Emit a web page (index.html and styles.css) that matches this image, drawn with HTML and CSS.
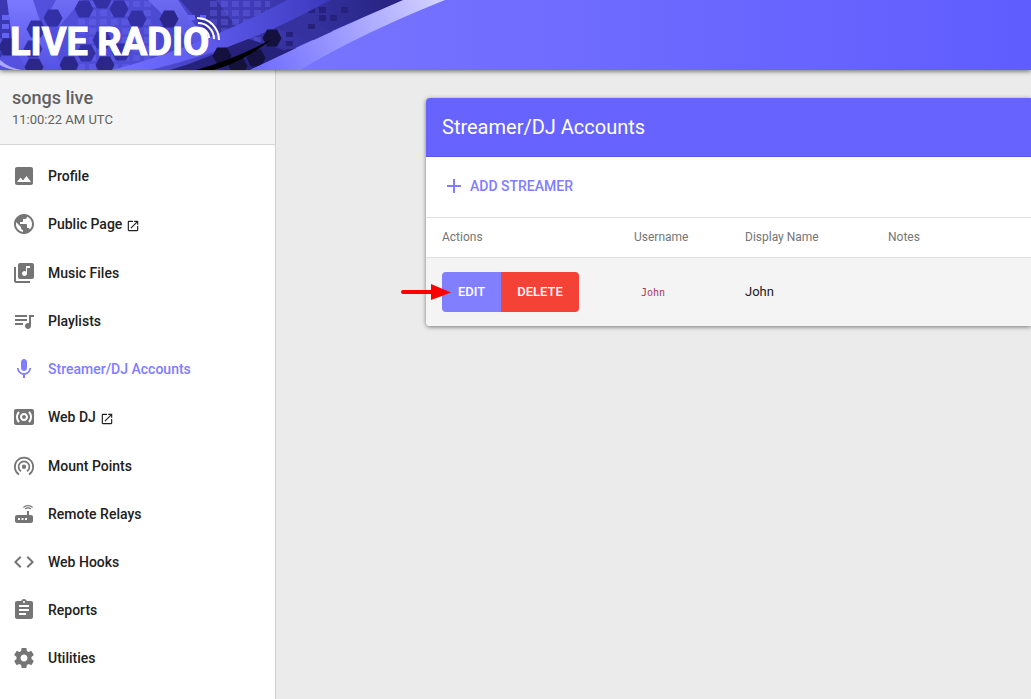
FILE: index.html
```html
<!DOCTYPE html>
<html lang="en">
<head>
<meta charset="utf-8">
<meta name="viewport" content="width=device-width, initial-scale=1">
<title>Streamer/DJ Accounts</title>
<link rel="stylesheet" href="styles.css">
</head>
<body>
<header class="topbar">
  <svg class="brand" width="450" height="70" viewBox="0 0 450 70" role="img" aria-label="Live Radio">
    <defs>
      <linearGradient id="base" x1="0" x2="1"><stop offset="0" stop-color="#5552e0"/><stop offset=".4" stop-color="#4c49d2"/><stop offset=".6" stop-color="#403cb8"/><stop offset="1" stop-color="#25227e"/></linearGradient>
      <linearGradient id="band" x1="0" x2="1"><stop offset="0" stop-color="#7472ff"/><stop offset=".4" stop-color="#5f5cf0"/><stop offset="1" stop-color="#3d39bd"/></linearGradient>
      <linearGradient id="shine" gradientUnits="userSpaceOnUse" x1="255" y1="70" x2="440" y2="0"><stop offset="0" stop-color="#6e6bff"/><stop offset=".45" stop-color="#9b99ff"/><stop offset="1" stop-color="#d3d2ff"/></linearGradient>
      <linearGradient id="beam" x1="0" y1="0" x2="0" y2="1"><stop offset="0" stop-color="#7b79ff"/><stop offset="1" stop-color="#5552e4"/></linearGradient>
      <pattern id="tiles" width="11" height="9" patternUnits="userSpaceOnUse"><rect x="1" y="1" width="7" height="6" fill="#7470f5" fill-opacity=".3"/></pattern>
      <path id="hex" d="M-9.500 0-5-8.500H5L9.500 0 5 8.500H-5Z"/>
    </defs>
    <path fill="url(#base)" d="M0 0H405Q330 30 250 70H0Z"/>
    <path fill="#3b37b0" d="M0 0H8L14 40 0 58Z"/>
    <path fill="url(#beam)" d="M7 0H33L45 36 64 70H26L12 40Z"/>
    <path fill="url(#beam)" opacity=".7" d="M56 0H82L58 28 46 18ZM0 38 14 46 20 58 0 52ZM148 0H178L214 54 190 42Z"/>
    <path fill="#35319f" d="M180 0H216L250 44 232 60ZM274 28 296 14 337 34 320 42ZM236 24 252 20 300 50 282 57Z"/>
    <path fill="url(#tiles)" d="M78 0H154V70H78ZM210 0H270V48H210Z"/>
    <g fill="#3330a6">
      <use href="#hex" x="53" y="18"/><use href="#hex" x="84" y="9"/><use href="#hex" x="119" y="9"/><use href="#hex" x="102" y="0"/><use href="#hex" x="36" y="29"/><use href="#hex" x="33" y="49"/><use href="#hex" x="86" y="53"/><use href="#hex" x="137" y="19"/><use href="#hex" x="121" y="52"/><use href="#hex" x="102" y="40"/>
    </g>
    <g fill="#2a268a"><use href="#hex" x="8" y="47"/><use href="#hex" x="34" y="67"/><use href="#hex" x="69" y="65"/><use href="#hex" x="105" y="65"/><use href="#hex" x="169" y="19"/></g>
    <g fill="#25217d"><path d="M308 7h7v6h-7ZM319 7h7v6h-7ZM341 7h7v6h-7ZM319 15h7v6h-7ZM330 15h7v6h-7ZM308 24h7v5h-7ZM286 32h7v5h-7ZM286 41h7v5h-7ZM286 49h7v4h-7Z"/></g>
    <g fill="#6563f2"><path d="M2 15h7v5H2ZM2 24h7v5H2ZM2 33h7v5H2ZM188 15h7v5h-7ZM200 15h6v5h-6Z"/></g>
    <path fill="#26227c" d="M170 70Q206 60 246 38L290 52 250 70Z"/>
    <path fill="url(#band)" d="M112 70Q198 48 287 0H330Q245 48 150 70Z"/>
    <g fill="#15113f"><use href="#hex" x="272" y="38"/><use href="#hex" x="256" y="58"/><use href="#hex" x="222" y="56"/><use href="#hex" x="238" y="66"/></g>
    <path fill="#000" d="M196 70Q235 59 272 39 240 64 213 70Z"/>
    <path fill="url(#shine)" d="M250 70Q327 33 403 0H445Q360 34 300 70Z"/>
    <path fill="#aaa8ff" d="M0 60Q9 68 22 70H14Q5 68 0 65Z"/>
    <text class="brand-text" x="10" y="55">LIVE RADIO</text>
    <g fill="none" stroke="#fff" stroke-width="2"><path d="M197 18A22 22 0 0 1 219 40"/><path d="M198 23A16 16 0 0 1 214 39"/><path d="M199 28A10 10 0 0 1 209 38"/></g>
  </svg>
</header>
<div class="layout">
  <aside class="sidebar">
    <div class="station">
      <div class="station-name">songs live</div>
      <div class="station-time">11:00:22 AM UTC</div>
    </div>
    <nav class="menu">
      <a href="#"><svg class="icon" viewBox="0 0 24 24"><path d="M21 19V5c0-1.100-.9-2-2-2H5c-1.100 0-2 .9-2 2v14c0 1.100.9 2 2 2h14c1.100 0 2-.9 2-2zM8.500 13.500l2.500 3.010L14.500 12l4.500 6H5l3.500-4.500z"/></svg><span>Profile</span></a>
      <a class="external" href="#"><svg class="icon" viewBox="0 0 24 24"><path d="M12 2C6.480 2 2 6.480 2 12s4.480 10 10 10 10-4.480 10-10S17.520 2 12 2zm-1 17.930c-3.950-.49-7-3.850-7-7.930 0-.62.08-1.210.21-1.790L9 15v1c0 1.100.9 2 2 2v1.930zm6.900-2.540c-.26-.81-1-1.390-1.900-1.390h-1v-3c0-.55-.45-1-1-1H8v-2h2c.55 0 1-.45 1-1V7h2c1.100 0 2-.9 2-2v-.41c2.930 1.190 5 4.060 5 7.410 0 2.080-.8 3.970-2.100 5.390z"/></svg><span>Public Page</span><svg class="open" viewBox="0 0 24 24"><path d="M19 19H5V5h7V3H5c-1.110 0-2 .9-2 2v14c0 1.100.89 2 2 2h14c1.100 0 2-.9 2-2v-7h-2v7zM14 3v2h3.590l-9.830 9.830 1.410 1.410L19 6.410V10h2V3h-7z"/></svg></a>
      <a href="#"><svg class="icon" viewBox="0 0 24 24"><path d="M20 2H8c-1.100 0-2 .9-2 2v12c0 1.100.9 2 2 2h12c1.100 0 2-.9 2-2V4c0-1.100-.9-2-2-2zm-2 5h-3v5.500c0 1.380-1.120 2.500-2.500 2.500S10 13.880 10 12.500s1.120-2.500 2.500-2.500c.57 0 1.080.19 1.500.51V5h4v2zM4 6H2v14c0 1.100.9 2 2 2h14v-2H4V6z"/></svg><span>Music Files</span></a>
      <a href="#"><svg class="icon" viewBox="0 0 24 24"><path d="M15 6H3v2h12V6zm0 4H3v2h12v-2zM3 16h8v-2H3v2zM17 6v8.180c-.31-.11-.65-.18-1-.18-1.660 0-3 1.340-3 3s1.340 3 3 3 3-1.340 3-3V8h3V6h-5z"/></svg><span>Playlists</span></a>
      <a class="active" href="#" aria-current="page"><svg class="icon" viewBox="0 0 24 24"><path d="M12 14c1.660 0 2.990-1.340 2.990-3L15 5c0-1.660-1.340-3-3-3S9 3.340 9 5v6c0 1.660 1.340 3 3 3zm5.300-3c0 3-2.540 5.100-5.300 5.100S6.700 14 6.700 11H5c0 3.410 2.720 6.230 6 6.720V21h2v-3.280c3.280-.48 6-3.300 6-6.720h-1.700z"/></svg><span>Streamer/DJ Accounts</span></a>
      <a class="external" href="#"><svg class="icon" viewBox="0 0 24 24"><path d="M20 4H4c-1.100 0-2 .9-2 2v12c0 1.100.9 2 2 2h16c1.100 0 2-.9 2-2V6c0-1.100-.9-2-2-2zM7.760 16.240l-1.410 1.410C4.780 16.100 4 14.050 4 12s.78-4.100 2.340-5.660l1.410 1.410C6.590 8.930 6 10.460 6 12s.59 3.070 1.760 4.240zM12 16c-2.210 0-4-1.790-4-4s1.790-4 4-4 4 1.790 4 4-1.790 4-4 4zm5.660 1.660l-1.410-1.410C17.410 15.070 18 13.540 18 12s-.59-3.070-1.760-4.240l1.410-1.410C19.220 7.900 20 9.950 20 12s-.78 4.100-2.340 5.660zM12 10c-1.100 0-2 .9-2 2s.9 2 2 2 2-.9 2-2-.9-2-2-2z"/></svg><span>Web DJ</span><svg class="open" viewBox="0 0 24 24"><path d="M19 19H5V5h7V3H5c-1.110 0-2 .9-2 2v14c0 1.100.89 2 2 2h14c1.100 0 2-.9 2-2v-7h-2v7zM14 3v2h3.590l-9.830 9.830 1.410 1.410L19 6.410V10h2V3h-7z"/></svg></a>
      <a href="#"><svg class="icon" viewBox="0 0 24 24"><g fill="none" stroke="#757575" stroke-width="1.700"><path d="M7 20.500A9.200 9.200 0 1 1 17 20.500"/><path d="M9 17.300A5.400 5.400 0 1 1 15 17.300"/></g><circle cx="12" cy="12.700" r="2.200"/></svg><span>Mount Points</span></a>
      <a href="#"><svg class="icon" viewBox="0 0 24 24"><path d="M20.200 5.900l.8-.8C19.600 3.700 17.800 3 16 3s-3.600.7-5 2.100l.8.8C13 4.800 14.500 4.200 16 4.200s3 .6 4.200 1.700zm-.9.800c-.9-.9-2.100-1.400-3.300-1.400s-2.400.5-3.300 1.400l.8.800c.7-.7 1.600-1 2.500-1s1.800.3 2.500 1l.8-.8zM19 13h-2V9h-2v4H5c-1.100 0-2 .9-2 2v4c0 1.100.9 2 2 2h14c1.100 0 2-.9 2-2v-4c0-1.100-.9-2-2-2zM8 18H6v-2h2v2zm3.500 0h-2v-2h2v2zm3.500 0h-2v-2h2v2z"/></svg><span>Remote Relays</span></a>
      <a href="#"><svg class="icon" viewBox="0 0 24 24"><path d="M9.400 16.600L4.800 12l4.600-4.600L8 6l-6 6 6 6 1.400-1.400zm5.200 0l4.600-4.600-4.600-4.600L16 6l6 6-6 6-1.400-1.400z"/></svg><span>Web Hooks</span></a>
      <a href="#"><svg class="icon" viewBox="0 0 24 24"><path d="M19 3h-4.180C14.400 1.840 13.300 1 12 1c-1.300 0-2.400.84-2.820 2H5c-1.100 0-2 .9-2 2v14c0 1.100.9 2 2 2h14c1.100 0 2-.9 2-2V5c0-1.100-.9-2-2-2zm-7 0c.55 0 1 .45 1 1s-.45 1-1 1-1-.45-1-1 .45-1 1-1zm2 14H7v-2h7v2zm3-4H7v-2h10v2zm0-4H7V7h10v2z"/></svg><span>Reports</span></a>
      <a href="#"><svg class="icon" viewBox="0 0 24 24"><path d="M19.430 12.980c.04-.32.07-.64.07-.98s-.03-.66-.07-.98l2.110-1.650c.19-.15.24-.42.12-.64l-2-3.460c-.12-.22-.39-.3-.61-.22l-2.490 1c-.52-.4-1.080-.73-1.690-.98l-.38-2.650C14.460 2.180 14.250 2 14 2h-4c-.25 0-.46.18-.49.42l-.38 2.650c-.61.25-1.170.59-1.690.98l-2.490-1c-.23-.09-.49 0-.61.22l-2 3.460c-.13.22-.07.49.12.64l2.110 1.650c-.04.32-.07.65-.07.98s.03.66.07.98l-2.110 1.650c-.19.15-.24.42-.12.64l2 3.460c.12.22.39.3.61.22l2.490-1c.52.4 1.080.73 1.690.98l.38 2.650c.03.24.24.42.49.42h4c.25 0 .46-.18.49-.42l.38-2.650c.61-.25 1.170-.59 1.690-.98l2.490 1c.23.09.49 0 .61-.22l2-3.460c.12-.22.07-.49-.12-.64l-2.110-1.650zM12 15.500c-1.930 0-3.500-1.570-3.500-3.500s1.570-3.500 3.500-3.500 3.500 1.570 3.500 3.500-1.570 3.500-3.500 3.500z"/></svg><span>Utilities</span></a>
    </nav>
  </aside>
  <main class="content">
    <section class="card">
      <h1 class="card-title">Streamer/DJ Accounts</h1>
      <div class="card-actions">
        <button class="add" type="button"><svg class="icon" viewBox="0 0 24 24"><path d="M19 13h-6v6h-2v-6H5v-2h6V5h2v6h6v2z"/></svg><span>Add Streamer</span></button>
      </div>
      <table class="accounts">
        <thead><tr><th class="col-actions">Actions</th><th class="col-user">Username</th><th class="col-display">Display Name</th><th>Notes</th></tr></thead>
        <tbody><tr>
          <td><div class="buttons"><button class="edit" type="button">Edit</button><button class="delete" type="button">Delete</button>
            <svg class="pointer" width="50" height="16" viewBox="0 0 50 16" aria-hidden="true"><path d="M2 8H32" stroke="#f00" stroke-width="4" stroke-linecap="round"/><path d="M30 0 50 8.500 30 16Z" fill="#f00"/></svg></div></td>
          <td><code>John</code></td><td>John</td><td></td>
        </tr></tbody>
      </table>
    </section>
  </main>
</div>
</body>
</html>
```
FILE: styles.css
```css
* { box-sizing: border-box; }
body {
  margin: 0;
  min-height: 100vh;
  display: flex;
  flex-direction: column;
  background: #ebebeb;
  color: #212121;
  font: 13px/20px Roboto, sans-serif;
}
button { border: 0; font: inherit; text-transform: uppercase; cursor: pointer; }
.topbar {
  position: relative;
  height: 70px;
  background: linear-gradient(90deg, #7774ff 30%, #605dff);
  box-shadow: 0 1px 5px rgba(0, 0, 0, .6);
}
.brand { display: block; }
.brand-text { font: 700 38px Roboto, sans-serif; fill: #fff; stroke: #fff; stroke-width: 1px; }
.layout { flex: 1; display: flex; }
.sidebar { width: 276px; flex: none; background: #fff; border-right: 1px solid #cfcfcf; }
.station { height: 75px; padding: 16px 12px; background: #f4f4f4; border-bottom: 1px solid #d6d6d6; color: #616161; }
.station-name { font-size: 18px; line-height: 24px; font-weight: 500; }
.station-time { line-height: 20px; }
.menu { padding-top: 7px; }
.menu a {
  display: flex;
  align-items: center;
  height: 48px;
  padding: 0 12px;
  color: #212121;
  font-size: 14px;
  font-weight: 500;
  text-decoration: none;
}
.menu a.external { margin-bottom: 1px; }
.icon { width: 24px; height: 24px; flex: none; fill: #757575; }
.menu .icon { margin-right: 12px; }
.menu .open { width: 14px; height: 14px; margin: 4px 0 0 4px; fill: #212121; }
.menu a.active { color: #807dff; }
.menu .active .icon, .add .icon { fill: #807dff; }
.content { flex: 1; min-width: 0; padding: 28px 0 28px 150px; }
.card { background: #fff; border-radius: 4px 0 0 4px; box-shadow: 0 1px 4px rgba(0, 0, 0, .5); }
.card-title {
  margin: 0;
  padding: 16px;
  height: 59px;
  border-bottom: 1px solid #5956e8;
  border-radius: 4px 0 0 0;
  background: #6663ff;
  color: #fff;
  font-size: 20px;
  line-height: 26px;
  font-weight: 400;
}
.card-actions { padding: 11px 16px 13px; }
.add {
  display: flex;
  align-items: center;
  gap: 4px;
  height: 36px;
  padding: 0;
  background: none;
  color: #807dff;
  font-size: 14px;
  font-weight: 500;
}
.accounts { width: 100%; table-layout: fixed; border-collapse: collapse; }
.accounts th { height: 40px; padding: 0 16px 2px; border-top: 1px solid #e0e0e0; color: #757575; font-size: 12px; font-weight: 400; text-align: left; }
.accounts td { height: 68px; padding: 14px 16px; border-top: 1px solid #e0e0e0; background: #f4f4f4; }
.accounts tbody td:first-child { border-radius: 0 0 0 4px; }
.col-actions { width: 192px; }
.col-user { width: 111px; }
.col-display { width: 143px; }
.buttons { position: relative; display: flex; }
.buttons button { height: 40px; padding: 0 16px; color: #fff; font-weight: 500; }
.edit { border-radius: 4px 0 0 4px; background: #827fff; }
.delete { border-radius: 0 4px 4px 0; background: #f44336; }
.pointer { position: absolute; left: -41px; top: 12px; }
.accounts code { padding: 0 7px; color: #b0305c; font: 10px/20px "DejaVu Sans Mono", monospace; }
```
